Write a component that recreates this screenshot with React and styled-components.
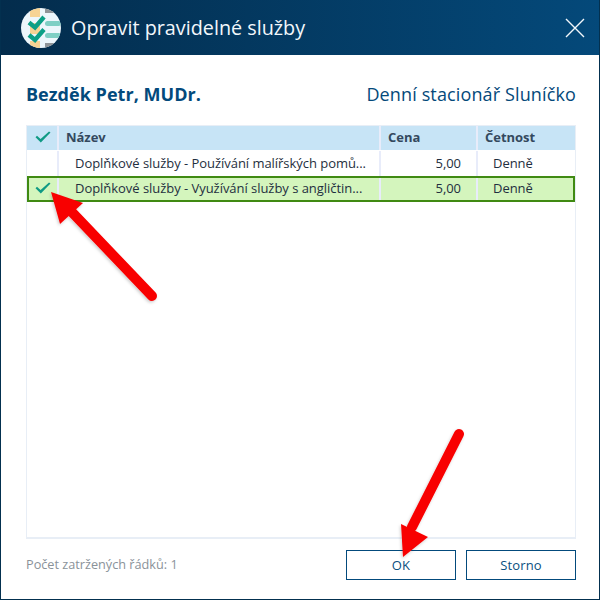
import React from "react";
import styled, { createGlobalStyle } from "styled-components";

const Global = createGlobalStyle`
  html, body { margin: 0; padding: 0; background: #fff; }
  body { font-family: "Open Sans", "Noto Sans", sans-serif; }
`;

const Win = styled.div`
  position: relative; width: 600px; height: 600px; box-sizing: border-box;
  border: 1px solid #03304f; border-top: 0; background: #fff;
  display: flex; flex-direction: column; overflow: hidden;
`;
const Header = styled.header`
  height: 55px; flex: none; margin: 0 -1px; display: flex; align-items: center;
  padding: 0 15px 0 21px;
  background: linear-gradient(90deg, #032c4c 0%, #04497a 100%);
`;
const Title = styled.h1`
  flex: 1; margin: 0 0 0 10px; font-size: 19.8px; font-weight: 400; color: #f2f7fb;
  line-height: 55px;
`;
const Content = styled.main`
  flex: 1; display: flex; flex-direction: column; padding: 25px 23px 0 25px; min-height: 0;
`;
const InfoRow = styled.div`
  display: flex; justify-content: space-between; align-items: center; height: 27px;
`;
const Person = styled.strong`
  font-size: 18px; font-weight: 700; color: #034a7c; letter-spacing: 0.03px;
`;
const Place = styled.span`
  font-size: 18px; font-weight: 400; color: #04497a; letter-spacing: 0.13px;
`;
const Grid = styled.div`
  margin-top: 18px; height: 414px; box-sizing: border-box;
  border: 1px solid #e8eef6; border-bottom-width: 2px;
  display: flex; flex-direction: column;
`;
const Row = styled.div`
  display: grid; grid-template-columns: 32px 322px 97px 1fr;
  height: ${p => p.$h}px; flex: none; box-sizing: border-box; position: relative;
  background: ${p => (p.$head ? "#c7e4f6" : p.$sel ? "#d4f5bd" : "#fff")};
  margin-bottom: ${p => (p.$head ? 1 : 0)}px;
`;
const SelFrame = styled.div`
  position: absolute; inset: 0; border: 2px solid #408a12; pointer-events: none;
`;
const Cell = styled.div`
  display: flex; align-items: center; overflow: hidden; white-space: nowrap;
  font-size: 13px; line-height: 24px; color: ${p => (p.$head ? "#34495e" : "#1f2f40")};
  font-weight: ${p => (p.$head ? 700 : 400)};
  padding-left: ${p => p.$pl || 0}px; padding-right: ${p => p.$pr || 0}px;
  padding-bottom: 2px;
  letter-spacing: -0.04px;
  justify-content: ${p => (p.$right ? "flex-end" : p.$center ? "center" : "flex-start")};
  border-right: ${p => (p.$last ? "none" : "2px solid #e8ecfa")};
  box-sizing: border-box;
`;
const Footer = styled.footer`
  display: flex; align-items: flex-start; margin-top: 11px;
`;
const Count = styled.span`
  flex: 1; font-size: 12.7px; color: #8a9299; line-height: 28px;
`;
const Button = styled.button`
  width: 110px; height: 30px; margin-left: 10px; padding: 0; box-sizing: border-box;
  background: #fff; border: 1px solid #034a7c; font: 400 13px "Open Sans", sans-serif; color: #0a4f80;
  letter-spacing: 0.1px;
`;
const Overlay = styled.svg`
  position: absolute; left: 0; top: 0; pointer-events: none;
`;
const TickMark = styled.svg`
  margin-left: 2px;
`;

const Tick = () => (
  <TickMark width="16" height="12" viewBox="0 0 16 12">
    <path d="M0.5 6.2 L2 4.7 L5.6 8 L14 0.5 L15.5 1.6 L5.8 11.5 Z" fill="#0f9a84" />
  </TickMark>
);

const Logo = () => (
  <svg width="40" height="40" viewBox="0 0 40 40">
    <defs><clipPath id="c"><circle cx="20" cy="20" r="20" /></clipPath></defs>
    <g clipPath="url(#c)">
      <rect width="40" height="40" fill="#edf6fb" />
      <rect x="9" y="0" width="10" height="9" fill="#f6d394" />
      <rect x="9" y="15" width="10" height="11" fill="#f6d394" />
      <rect x="9" y="33" width="10" height="7" fill="#f6d394" />
      <rect x="24" y="0" width="16" height="5" fill="#8f9498" />
      <rect x="24" y="35" width="16" height="5" fill="#8f9498" />
      <rect x="24" y="13" width="16" height="5" rx="2.5" fill="#7fcfc4" />
      <rect x="24" y="25" width="16" height="5" rx="2.5" fill="#7fcfc4" />
      <path d="M8 14.5 L14 19.5 L23 9" fill="none" stroke="#0c9f86" strokeWidth="4.4" />
      <path d="M8 27 L14 32 L23 21.5" fill="none" stroke="#0c9f86" strokeWidth="4.4" />
    </g>
  </svg>
);

const CloseIcon = () => (
  <svg width="20" height="20" viewBox="0 0 20 20">
    <path d="M1 1 L19 19 M19 1 L1 19" stroke="#f2f7fb" strokeWidth="1.4" fill="none" />
  </svg>
);

const Arrows = () => (
  <Overlay width="600" height="600" viewBox="0 0 600 600">
    <defs>
      <filter id="s" x="-20%" y="-20%" width="140%" height="140%">
        <feDropShadow dx="-1" dy="1.5" stdDeviation="1.5" floodColor="#000" floodOpacity="0.2" />
      </filter>
    </defs>
    <g filter="url(#s)">
      <path d="M151 296 L67 208" stroke="#f80000" strokeWidth="10" strokeLinecap="round" fill="none" />
      <path d="M50 192 L82 203 L59 224 Z" fill="#f80000" />
      <path d="M458 434 L411 527" stroke="#f80000" strokeWidth="10" strokeLinecap="round" fill="none" />
      <path d="M402 557 L400 524 L427 537 Z" fill="#f80000" />
    </g>
  </Overlay>
);

const rows = [
  { name: "Doplňkové služby - Používání malířských pomů...", sel: false, h: 25 },
  { name: "Doplňkové služby - Využívání služby s angličtin...", sel: true, h: 26 },
];

export default function App() {
  return (
    <Win>
      <Global />
      <Header>
        <Logo />
        <Title>Opravit pravidelné služby</Title>
        <CloseIcon />
      </Header>
      <Content>
        <InfoRow>
          <Person>Bezděk Petr, MUDr.</Person>
          <Place>Denní stacionář Sluníčko</Place>
        </InfoRow>
        <Grid>
          <Row $head $h={24}>
            <Cell $head $center><Tick /></Cell>
            <Cell $head $pl={7}>Název</Cell>
            <Cell $head $pl={7}>Cena</Cell>
            <Cell $head $last $pl={7}>Četnost</Cell>
          </Row>
          {rows.map(r => (
            <Row key={r.name} $sel={r.sel} $h={r.h}>
              <Cell $center>{r.sel && <Tick />}</Cell>
              <Cell $pl={16}>{r.name}</Cell>
              <Cell $right $pr={15}>5,00</Cell>
              <Cell $last $pl={15}>Denně</Cell>
              {r.sel && <SelFrame />}
            </Row>
          ))}
        </Grid>
        <Footer>
          <Count>Počet zatržených řádků: 1</Count>
          <Button>OK</Button>
          <Button>Storno</Button>
        </Footer>
      </Content>
      <Arrows />
    </Win>
  );
}
